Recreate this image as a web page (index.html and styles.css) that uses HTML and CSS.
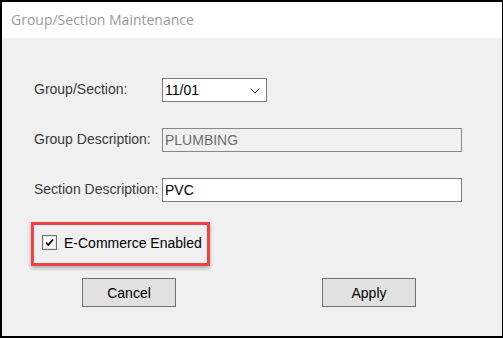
FILE: index.html
```html
<!DOCTYPE html>
<html lang="en">
<head>
    <meta charset="UTF-8">
    <title>Group/Section Maintenance</title>
    <link rel="stylesheet" href="styles.css">
</head>
<body>
    <div class="dialog">
        <div class="title-bar">Group/Section Maintenance</div>

        <div class="dialog-body">
            <div class="field-row">
                <label class="field-label">Group/Section:</label>
                <div class="combo">
                    <span class="combo-value">11/01</span>
                    <svg class="combo-arrow" width="10" height="6" viewBox="0 0 10 6">
                        <polyline points="0.5,0.5 5,5 9.5,0.5" fill="none" stroke="#333" stroke-width="1"/>
                    </svg>
                </div>
            </div>

            <div class="field-row">
                <label class="field-label">Group Description:</label>
                <div class="text-box disabled">PLUMBING</div>
            </div>

            <div class="field-row">
                <label class="field-label">Section Description:</label>
                <div class="text-box">PVC</div>
            </div>

            <div class="highlight">
                <span class="check-box">
                    <svg width="9" height="9" viewBox="0 0 9 9">
                        <polyline points="1,4.5 3.2,7 8,1.5" fill="none" stroke="#000" stroke-width="1.8"/>
                    </svg>
                </span>
                <span class="check-label">E-Commerce Enabled</span>
            </div>

            <div class="button-row">
                <button class="btn btn-cancel">Cancel</button>
                <button class="btn btn-apply">Apply</button>
            </div>
        </div>
    </div>
</body>
</html>
```

FILE: styles.css
```css
* {
    margin: 0;
    padding: 0;
    box-sizing: border-box;
}

body {
    width: 503px;
    height: 338px;
    overflow: hidden;
    font-family: "Liberation Sans", Arial, sans-serif;
}

.dialog {
    width: 503px;
    height: 338px;
    border: 2px solid #000;
    border-right-width: 1px;
    background: #f0f0f0;
    display: flex;
    flex-direction: column;
}

.title-bar {
    height: 36px;
    background: #fff;
    color: #999;
    font-family: "Open Sans", "Noto Sans", sans-serif;
    font-size: 14px;
    line-height: 36px;
    padding-left: 9px;
}

.dialog-body {
    padding: 40px 0 0 32px;
    display: flex;
    flex-direction: column;
}

.field-row {
    display: flex;
    align-items: center;
    height: 24px;
    margin-bottom: 26px;
}

.field-label {
    width: 128px;
    font-size: 14px;
    color: #3a3a3a;
    margin-top: -2px;
    white-space: nowrap;
}

.combo {
    width: 105px;
    height: 24px;
    border: 1px solid #7a7a7a;
    background: #fff;
    display: flex;
    align-items: center;
    justify-content: space-between;
    padding: 0 6px 0 2px;
}

.combo-value,
.text-box {
    font-size: 14px;
    color: #000;
}

.combo-arrow {
    margin-top: 1px;
}

.text-box {
    width: 300px;
    height: 24px;
    border: 1px solid #7a7a7a;
    background: #fff;
    line-height: 22px;
    padding-left: 2px;
}

.text-box.disabled {
    background: #f0f0f0;
    color: #6d6d6d;
    border-color: #888;
}

.highlight {
    margin: -6px 0 0 -3px;
    width: 179px;
    height: 44px;
    border: 3px solid #f04246;
    box-shadow: 0 2px 4px rgba(0, 0, 0, 0.3);
    display: flex;
    align-items: center;
    padding-left: 8px;
}

.check-box {
    width: 15px;
    height: 15px;
    border: 1px solid #707070;
    background: #fff;
    box-shadow: inset 0 0 0 1px #e3e3e3;
    display: flex;
    align-items: center;
    justify-content: center;
    margin-top: -3px;
}

.check-label {
    margin-left: 7px;
    font-size: 14px;
    color: #000;
    margin-top: -3px;
}

.button-row {
    display: flex;
    margin: 12px 0 0 48px;
    gap: 146px;
}

.btn {
    width: 94px;
    height: 29px;
    border: 1px solid #707070;
    background: #e1e1e1;
    font-family: "Liberation Sans", Arial, sans-serif;
    font-size: 14px;
    color: #000;
}
```
